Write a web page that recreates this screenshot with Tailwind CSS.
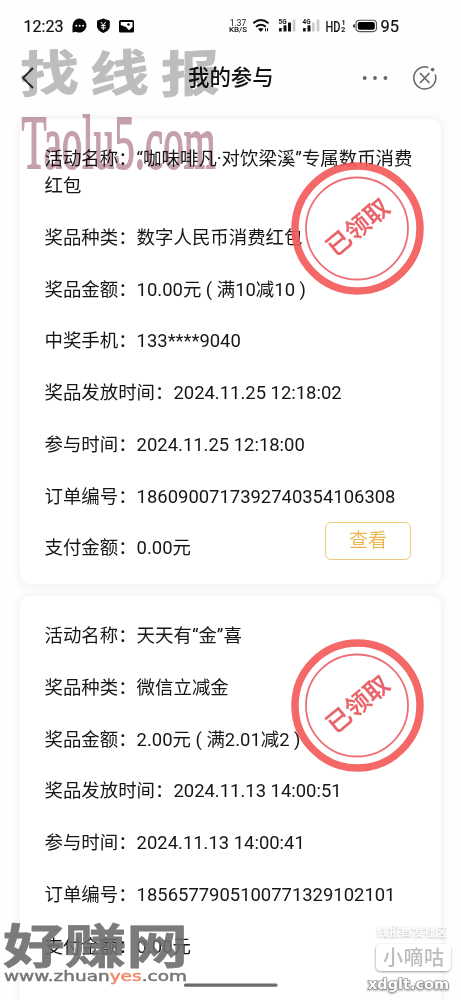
<!DOCTYPE html>
<html lang="zh-CN">
<head>
<meta charset="utf-8">
<title>我的参与</title>
<script src="https://cdn.jsdelivr.net/npm/@tailwindcss/browser@4"></script>
</head>
<body class="bg-[#fefefe]">
<main class="relative flex h-[1000px] w-[461px] flex-col overflow-hidden bg-[#fefefe] font-[Roboto,'Noto_Sans_CJK_SC',sans-serif] text-[#161616]">
  <!-- status bar -->
  <header class="h-[50px] shrink-0">
    <svg class="block" width="461" height="50" viewBox="0 0 461 50">
      <text x="23.500" y="32" font-size="17" textLength="40" lengthAdjust="spacingAndGlyphs" fill="#111" stroke="#111" stroke-width=".2">12:23</text>
      <path d="M79.500 18.500a7.200 7 0 1 1-3.500 13.200L72.500 32.500V26a7.100 7.400 0 0 1 7-7.500z" fill="#050505"/>
      <g fill="#fff"><circle cx="76.300" cy="25.700" r="1"/><circle cx="79.700" cy="25.700" r="1"/><circle cx="83.100" cy="25.700" r="1"/></g>
      <path d="M103.300 18.500L109.800 20.800V26.500Q109.300 30.500 103.300 33Q97.500 30.500 97 26.500V20.800z" fill="#050505"/>
      <path d="M100.800 22l2.500 3.200 2.500-3.200M103.300 25.200v4.800M100.800 25.700h5M100.800 27.900h5" fill="none" stroke="#fff" stroke-width="1"/>
      <rect x="119" y="20" width="15" height="12.500" rx="1.500" fill="#050505"/>
      <path d="M120.800 22h11.700v5l-3.500 3.300-3-3.300-5.200-2z" fill="#fff"/><circle cx="128.500" cy="24.500" r="1.300" fill="#050505"/>
      <text x="230" y="25.500" font-size="8.500" textLength="16" lengthAdjust="spacingAndGlyphs" fill="#111">1.37</text>
      <text x="229" y="32" font-size="7.500" font-weight="500" textLength="18" lengthAdjust="spacingAndGlyphs" fill="#111">KB/S</text>
      <g fill="none" stroke="#111" stroke-width="1.900"><path d="M253.300 23.200Q260.800 16.800 268.500 23.200"/><path d="M256 26.700Q261 22.800 265.800 26.700"/></g>
      <path d="M258 28.800Q260.800 27.300 263.500 28.800L260.800 32z" fill="#111"/><path d="M265.500 28.300v3M267.500 28.300v3" stroke="#111" stroke-width="1"/>
      <g fill="#111"><text x="278.500" y="24" font-size="6.500" font-weight="700" textLength="8" lengthAdjust="spacingAndGlyphs">5G</text>
      <rect x="279" y="28" width="2.700" height="3.500" rx=".6"/><rect x="283.500" y="25.300" width="3" height="6.200" rx=".6"/><rect x="288" y="22.500" width="3" height="9" rx=".6"/>
      <text x="302.500" y="24" font-size="6.500" font-weight="700" textLength="8" lengthAdjust="spacingAndGlyphs">4G</text>
      <rect x="303" y="28" width="2.700" height="3.500" rx=".6"/><rect x="307.500" y="25.300" width="3" height="6.200" rx=".6"/></g>
      <g fill="#ccc"><rect x="292.600" y="19.500" width="2.800" height="12" rx=".6"/><rect x="312" y="22.500" width="2.800" height="9" rx=".6"/><rect x="316.600" y="19.500" width="2.800" height="12" rx=".6"/></g>
      <text x="325.500" y="31.500" font-size="15.500" font-weight="500" textLength="15" lengthAdjust="spacingAndGlyphs" fill="#111">HD</text>
      <text x="341.500" y="25.300" font-size="7" font-weight="700" fill="#111">1</text><text x="341.300" y="32" font-size="7" font-weight="700" fill="#111">2</text>
      <rect x="356" y="20.200" width="20.500" height="11.400" rx="3.500" fill="#fff" stroke="#555" stroke-width="1.100"/><rect x="357.800" y="22" width="17" height="7.800" rx="2" fill="#000"/><path d="M354.800 24v4q-2-.5-2-2t2-2z" fill="#333"/>
      <text x="380.500" y="31.700" font-size="17" textLength="18.500" lengthAdjust="spacingAndGlyphs" fill="#111" stroke="#111" stroke-width=".2">95</text>
    </svg>
  </header>
  <!-- title bar -->
  <nav class="flex h-[56px] shrink-0 items-center pl-[21px] pr-[23px]">
    <svg width="14" height="24" viewBox="0 0 14 24" fill="none" stroke="#333" stroke-width="2"><path d="M12 2L2 12l10 10"/></svg>
    <h1 class="ml-[153px] w-[86px] whitespace-nowrap text-[21.4px] font-medium leading-8 text-[#111]">我的参与</h1>
    <svg class="ml-auto" width="76" height="28" viewBox="0 0 76 28">
      <g fill="#666"><circle cx="2.700" cy="14" r="1.900"/><circle cx="13" cy="14" r="1.900"/><circle cx="23.400" cy="14" r="1.900"/></g>
      <path d="M66.300 3.500A11 11 0 1 0 73.200 10.400" fill="none" stroke="#666" stroke-width="1.500"/>
      <circle cx="70.600" cy="5.600" r="1.800" fill="#666"/>
      <path d="M58 9l9.500 10M67.500 9l-9.500 10" stroke="#666" stroke-width="1.700"/>
    </svg>
  </nav>
  <!-- records -->
  <section class="mt-[13px] flex flex-col gap-3 px-5">
    <article class="relative flex h-[465px] flex-col gap-[24.75px] whitespace-nowrap rounded-[10px] bg-white pl-[24.500px] pt-[26px] text-[18.430px] leading-[27px] shadow-[0_0_9px_2px_rgba(0,0,0,0.055)]">
      <p>活动名称：“咖味啡凡·对饮梁溪”专属数币消费<br>红包</p>
      <p>奖品种类：数字人民币消费红包</p>
      <p>奖品金额：10.00元 ( 满10减10 )</p>
      <p>中奖手机：133****9040</p>
      <p>奖品发放时间：2024.11.25 12:18:02</p>
      <p>参与时间：2024.11.25 12:18:00</p>
      <p>订单编号：1860900717392740354106308</p>
      <div class="flex items-start justify-between pr-[30px]">
        <p>支付金额：0.00元</p>
        <button class="-my-[12px] h-[38px] w-[86px] rounded-[6px] border-[1.500px] border-[#edcb7c] text-[19px] leading-[34px] text-[#e9b850]">查看</button>
      </div>
      <svg class="absolute left-[270px] top-[43px] opacity-90" width="134" height="134" viewBox="0 0 134 134">
        <circle cx="67.500" cy="66.500" r="62.500" fill="none" stroke="#f35858" stroke-width="7.500"/><circle cx="67" cy="66.500" r="51" fill="none" stroke="#ec6068" stroke-width="1.800"/>
        <text transform="translate(67.500 65) rotate(-40)" text-anchor="middle" y="9" font-size="24.500" font-weight="500" stroke="#e55158" stroke-width=".3" fill="#e55158">已领取</text>
      </svg>
    </article>
    <article class="relative flex h-[465px] flex-col gap-[24.75px] whitespace-nowrap rounded-[10px] bg-white pl-[24.500px] pt-[26px] text-[18.430px] leading-[27px] shadow-[0_0_9px_2px_rgba(0,0,0,0.055)]">
      <p>活动名称：天天有“金”喜</p>
      <p>奖品种类：微信立减金</p>
      <p>奖品金额：2.00元 ( 满2.01减2 )</p>
      <p>奖品发放时间：2024.11.13 14:00:51</p>
      <p>参与时间：2024.11.13 14:00:41</p>
      <p>订单编号：1856577905100771329102101</p>
      <p>支付金额：0.00元</p>
      <svg class="absolute left-[270px] top-[43px] opacity-90" width="134" height="134" viewBox="0 0 134 134">
        <circle cx="67.500" cy="66.500" r="62.500" fill="none" stroke="#f35858" stroke-width="7.500"/><circle cx="67" cy="66.500" r="51" fill="none" stroke="#ec6068" stroke-width="1.800"/>
        <text transform="translate(67.500 65) rotate(-40)" text-anchor="middle" y="9" font-size="24.500" font-weight="500" stroke="#e55158" stroke-width=".3" fill="#e55158">已领取</text>
      </svg>
    </article>
  </section>
  <!-- watermarks -->
  <svg class="pointer-events-none absolute inset-0 mix-blend-multiply" width="461" height="1000" viewBox="0 0 461 1000">
    <g fill="#bfbdbd" font-weight="700" font-size="56" stroke="#bfbdbd" stroke-width="1" stroke-linejoin="round">
      <text transform="translate(20 93) skewY(-3) scale(1.050 .88)">找</text><text transform="translate(90 93) skewY(-3) scale(1.050 .88)">线</text><text transform="translate(161 93) skewY(-3) scale(1.050 .88)">报</text>
    </g>
    <text x="21.500" y="168" font-family="Liberation Serif" font-size="77" textLength="194" lengthAdjust="spacingAndGlyphs" fill="#c5a0aa" stroke="#c5a0aa" stroke-width="1.800">Taolu5.com</text>
  </svg>
  <svg class="pointer-events-none absolute inset-0" width="461" height="1000" viewBox="0 0 461 1000">
    <defs><filter id="sh" x="-20%" y="-20%" width="140%" height="150%"><feDropShadow dx="-0.300" dy="1" stdDeviation=".9" flood-color="#000" flood-opacity=".4"/></filter></defs>
    <text transform="translate(3 963) scale(1 .76)" font-size="61" textLength="185" lengthAdjust="spacingAndGlyphs" font-weight="700" fill="#6d6d6d" stroke="#6d6d6d" stroke-width="1" stroke-linejoin="round" opacity=".9">好赚网</text>
    <text x="4" y="981" font-family="DejaVu Sans" font-size="14.500" textLength="183" lengthAdjust="spacingAndGlyphs" fill="#777" stroke="#777" stroke-width=".5">www.zhuan<tspan fill="#f08a68" stroke="#f08a68">yes</tspan>.com</text>
    <rect x="184" y="983.500" width="93.500" height="3.200" rx="1.500" fill="#6a6a6a"/>
    <g filter="url(#sh)" fill="#fff">
      <text x="377" y="936" font-size="11.500" font-weight="500" textLength="70" fill-opacity=".8">线报首发社区</text>
      <rect x="376" y="944" width="75" height="27" rx="5"/>
      <text x="368" y="989" font-family="DejaVu Sans" font-weight="700" font-size="14" textLength="81" lengthAdjust="spacingAndGlyphs" stroke="#777" stroke-width="1.200" paint-order="stroke">xdglt.com</text>
    </g>
    <text x="383" y="964.500" font-size="20" font-weight="500" textLength="61" fill="#bcbcbc">小嘀咕</text>
  </svg>
</main>
</body>
</html>
